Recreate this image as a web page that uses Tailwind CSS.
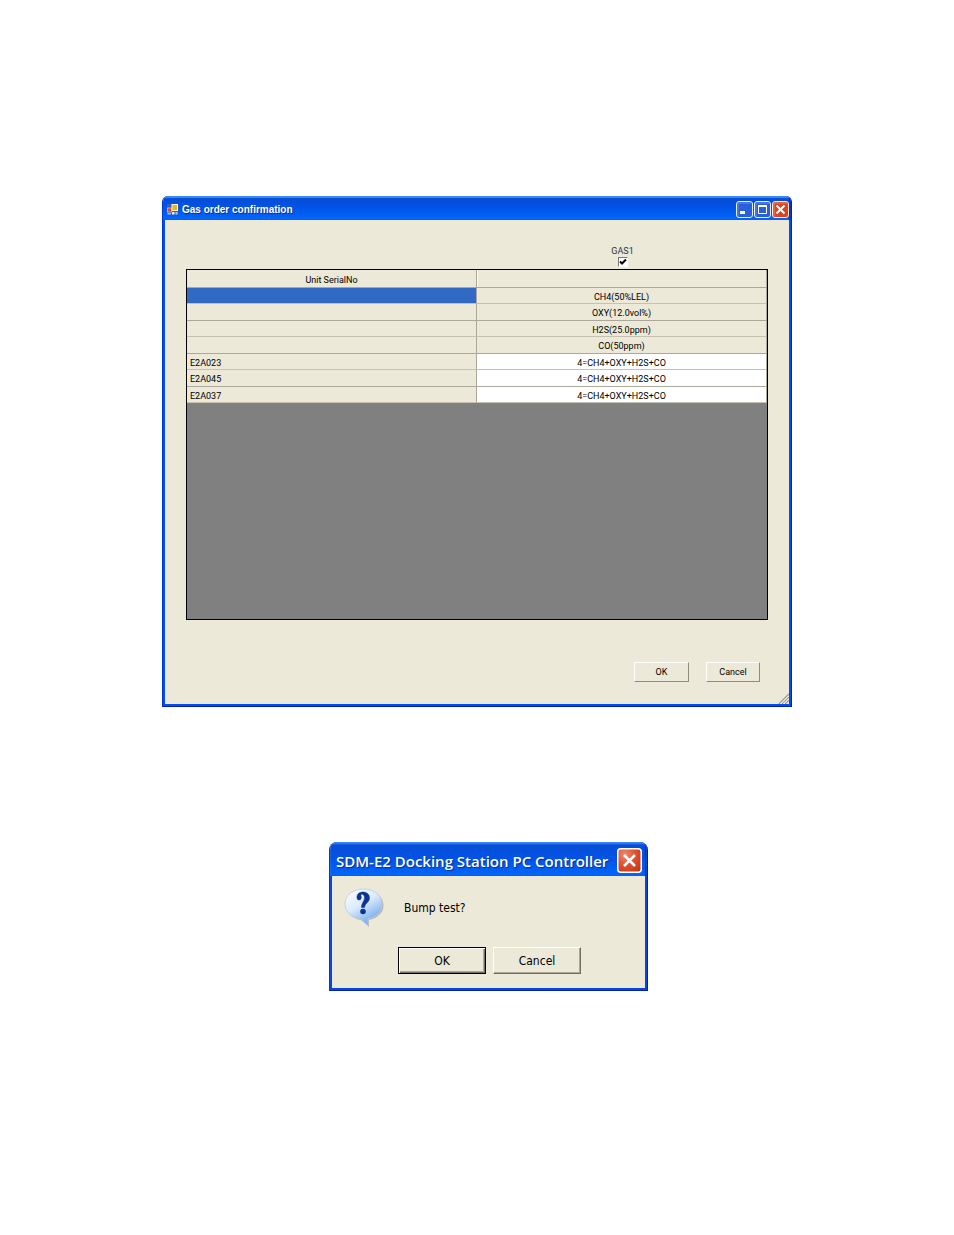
<!DOCTYPE html>
<html lang="en">
<head>
<meta charset="utf-8">
<meta name="viewport" content="width=device-width, initial-scale=1">
<title>Gas order confirmation</title>
<script src="https://cdn.jsdelivr.net/npm/@tailwindcss/browser@4"></script>
</head>
<body class="bg-white text-black">
<main class="flex flex-col items-center pt-49">

  <section aria-labelledby="gas-title" class="w-full max-w-[630px] overflow-hidden rounded-t-md border-x border-b border-[#0022a0] border-l-[#0038d8] bg-[#ece9d8] font-[Roboto,sans-serif] text-[9px] leading-3">
    <header class="flex h-6 items-center gap-px bg-linear-to-b from-[#0a4ad0] via-[#0054e8] to-[#0367fc] pr-[2px] pl-1 shadow-[inset_0_2px_1px_#3a8cf8,inset_-2px_0_1px_#0831b0]">
      <svg class="mt-1 mr-[2px] size-3" viewBox="0 0 12 12" aria-hidden="true">
        <rect x="0" y="0" width="11.500" height="11" fill="#2a62c8"/>
        <rect x="0.500" y="4" width="4" height="4" fill="#e2452e" stroke="#fbd0c0" stroke-width=".6"/>
        <rect x="4.500" y="0" width="6.500" height="7" fill="#fff4c8"/>
        <rect x="5.500" y="1" width="4.500" height="5" fill="#f2b318"/>
        <rect x="0.500" y="9" width="3.500" height="1.500" fill="#8fb8f8"/>
        <rect x="5" y="8" width="2.500" height="2.500" fill="#e8f0ff"/>
        <rect x="8.500" y="8" width="2" height="2.500" fill="#a9c8f8"/>
      </svg>
      <h1 id="gas-title" class="grow pt-1 font-['Liberation_Sans',sans-serif] text-[10px] font-bold text-white [text-shadow:1px_1px_#0a2f90]">Gas order confirmation</h1>
      <button type="button" aria-label="Minimize" class="mt-[3px] size-[17px]">
        <svg viewBox="0 0 17 17" class="size-full"><rect x=".5" y=".5" width="16" height="16" rx="2.500" fill="#2b60dc" stroke="#e8effc"/><path d="M2 15V2h13" stroke="#5f8df0" fill="none"/><rect x="4" y="10" width="5" height="3" fill="#fff"/></svg>
      </button>
      <button type="button" aria-label="Maximize" class="mt-[3px] size-[17px]">
        <svg viewBox="0 0 17 17" class="size-full"><rect x=".5" y=".5" width="16" height="16" rx="2.500" fill="#2b60dc" stroke="#e8effc"/><path d="M2 15V2h13" stroke="#5f8df0" fill="none"/><path d="M4.500 12.500v-7h8v7z" fill="none" stroke="#fff"/><path d="M4 5h9" stroke="#fff" stroke-width="2"/></svg>
      </button>
      <button type="button" aria-label="Close" class="mt-[3px] size-[17px]">
        <svg viewBox="0 0 17 17" class="size-full"><rect x=".5" y=".5" width="16" height="16" rx="2.500" fill="#d9451c" stroke="#fbe9e4"/><path d="M2 15V2h13" stroke="#ec8466" fill="none"/><path d="M4.500 4.500l8 8m0-8l-8 8" stroke="#fff" stroke-width="2"/></svg>
      </button>
    </header>

    <div class="relative border-x-2 border-b-2 border-[#0050f0] px-[21px] pt-[26px] pb-[22px]">
      <div class="grid grid-cols-2">
        <label class="col-start-2 flex w-fit flex-col items-center justify-self-center leading-[11px] text-[#333]">GAS1
          <span class="relative flex size-[10px] items-center justify-center border border-white border-t-[#777] border-l-[#777] bg-white">
            <input type="checkbox" checked class="peer absolute inset-0 size-full appearance-none">
            <svg class="invisible relative size-2 peer-checked:visible" viewBox="0 0 8 8" aria-hidden="true"><path d="M1 3.500L3 5.500L7 1.500" fill="none" stroke="#000" stroke-width="2"/></svg>
          </span>
        </label>
      </div>
      <div class="mt-[2px] h-[351px] border border-black bg-[#808080]">
        <table class="w-full table-fixed border-separate border-spacing-0 text-center [&_td]:border-r [&_td]:border-b [&_td]:border-[#aca899] [&_td]:px-[3px] [&_td]:pt-[2px] [&_td]:pb-0 [&_th]:border-r [&_th]:border-b [&_th]:border-[#aca899] [&_th]:px-0 [&_th]:pt-[2px] [&_th]:pb-0">
          <thead>
            <tr class="h-[18px] bg-[#ece9d8]"><th scope="col" class="w-1/2 font-normal">Unit SerialNo</th><th scope="col" class="font-normal shadow-[inset_1px_0_#fff]" aria-label="Gas 1"></th></tr>
          </thead>
          <tbody class="[&>tr]:h-[17px] [&>tr]:bg-[#ece9d8] [&>tr:nth-child(odd)]:h-4 [&>tr:nth-child(odd)>td]:border-b-[#c6c2b2]">
            <tr><td class="bg-[#316ac5]"></td><td>CH4(50%LEL)</td></tr>
            <tr><td></td><td>OXY(12.0vol%)</td></tr>
            <tr><td></td><td>H2S(25.0ppm)</td></tr>
            <tr><td></td><td>CO(50ppm)</td></tr>
            <tr><td class="text-left">E2A023</td><td class="bg-white">4=CH4+OXY+H2S+CO</td></tr>
            <tr><td class="text-left">E2A045</td><td class="bg-white">4=CH4+OXY+H2S+CO</td></tr>
            <tr><td class="text-left">E2A037</td><td class="bg-white">4=CH4+OXY+H2S+CO</td></tr>
          </tbody>
        </table>
      </div>
      <div class="mt-[42px] flex justify-end gap-[17px] pr-2">
        <button type="button" class="h-5 w-[55px] border border-t-white border-r-[#8f8c7e] border-b-[#8f8c7e] border-l-white">OK</button>
        <button type="button" class="h-5 w-[54px] border border-t-white border-r-[#8f8c7e] border-b-[#8f8c7e] border-l-white">Cancel</button>
      </div>
      <svg class="absolute right-0 bottom-0 size-[11px]" viewBox="0 0 11 11" aria-hidden="true"><path d="M1 11L11 1M4 11l7-7M7 11l4-4" stroke="#9d9a8a" stroke-width="1.500"/><path d="M2.500 11L11 2.500M5.500 11L11 5.500" stroke="#fff"/></svg>
    </div>
  </section>

  <section role="dialog" aria-labelledby="bump-title" class="mt-[135px] ml-[23px] w-full max-w-[319px] overflow-hidden rounded-t-lg border-x border-b border-[#0022a0] border-l-[#0038d8] bg-[#ece9d8] font-['DejaVu_Sans_Condensed','DejaVu_Sans',sans-serif] text-xs">
    <header class="flex h-[34px] items-center justify-between bg-linear-to-b from-[#0a4ad0] via-[#0054e8] to-[#0367fc] pr-[5px] pl-[6px] shadow-[inset_0_2px_2px_#3a8cf8,inset_-2px_0_1px_#0831b0]">
      <h2 id="bump-title" class="pt-[3px] font-['Open_Sans',sans-serif] text-[15px] font-semibold whitespace-nowrap text-white [text-shadow:1px_1px_1px_#0a2f90]">SDM-E2 Docking Station PC Controller</h2>
      <button type="button" aria-label="Close" class="mt-[3px] size-[25px] shrink-0">
        <svg viewBox="0 0 25 25" class="size-full"><defs><radialGradient id="red" cx=".3" cy=".25" r=".9"><stop offset="0" stop-color="#ee8a6c"/><stop offset=".5" stop-color="#df5030"/><stop offset="1" stop-color="#c03a12"/></radialGradient></defs><rect x=".75" y=".75" width="23.500" height="23.500" rx="3" fill="url(#red)" stroke="#fff" stroke-width="1.500"/><path d="M7 7l11 11M18 7L7 18" stroke="#fff" stroke-width="2.500"/></svg>
      </button>
    </header>
    <div class="border-x-2 border-b-2 border-[#0846e0] pt-3 pb-[14px]">
      <div class="flex items-start gap-5 pl-3">
        <svg class="h-[39px] w-10" viewBox="0 0 40 39" aria-hidden="true">
          <defs><linearGradient id="bubble" x1="0" y1="0" x2=".6" y2="1"><stop offset="0" stop-color="#fff"/><stop offset=".5" stop-color="#dcebfd"/><stop offset="1" stop-color="#6fa6ea"/></linearGradient></defs>
          <path d="M21 2C10 2 2.500 8 2.500 17.500C2.500 25 9 31 17 32L25 39V32C33 30.500 39.500 25 39.500 18C39.500 8.500 32 2.500 21 2Z" fill="#8f8f88" opacity=".55"/>
          <path d="M19.500 1C9 1 1 7 1 16C1 24 8 30 16.500 31L24 37.500V30.800C32 29.500 38 24 38 16C38 7 30 1 19.500 1Z" fill="url(#bubble)" stroke="#b5cbe8" stroke-width=".8"/>
          <path d="M13 10C12.500 6 15.500 4 19 4C23 4 25.500 6.500 25.500 10C25.500 14.500 21 15 20.500 19.500L17.500 19.500C17.500 14.500 20.500 13.500 20.500 9.800C20.500 7.500 19.500 6.200 18 6.200C17 6.200 16.500 6.800 17 8C18 10.500 16.500 12 15 12C13.800 12 13 11 13 10Z" fill="#0c3494" stroke="#0c3494" stroke-width=".5"/><circle cx="19" cy="23.500" r="2.800" fill="#0c3494"/>
        </svg>
        <p class="pt-3 leading-4">Bump test?</p>
      </div>
      <div class="mt-5 flex justify-center gap-[7px] pl-0.5">
        <button type="button" class="h-[27px] w-[88px] border border-black bg-[#ece9d8] shadow-[inset_1px_1px_#fff,inset_-1px_-1px_#716f64,inset_-2px_-2px_#aca899]">OK</button>
        <button type="button" class="h-[27px] w-[88px] border border-t-white border-r-[#716f64] border-b-[#716f64] border-l-white bg-[#ece9d8] shadow-[inset_-1px_-1px_#aca899]">Cancel</button>
      </div>
    </div>
  </section>
</main>
</body>
</html>
